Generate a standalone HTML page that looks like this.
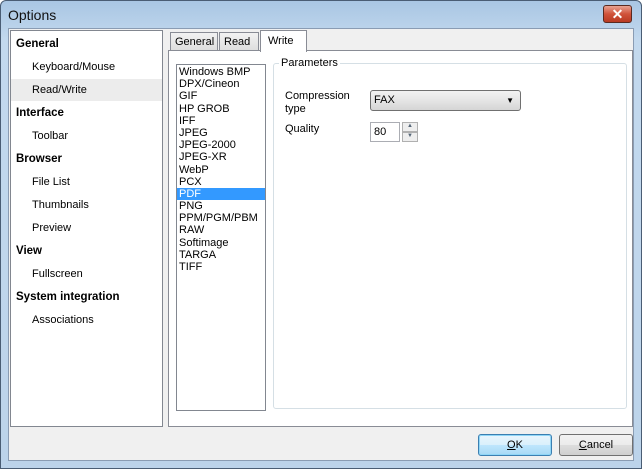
<!DOCTYPE html>
<html><head><style>
*{margin:0;padding:0;box-sizing:border-box}
body{width:642px;height:469px;overflow:hidden;font-family:"Liberation Sans",sans-serif;font-size:11px;color:#000;background:#fff}
.win{position:absolute;left:0;top:0;width:642px;height:469px;background:linear-gradient(#a9c6e3,#c3d9ee 40px,#bcd3ea);border:1px solid #4a5d74;border-radius:6px 6px 0 0}
.title{position:absolute;left:7px;top:6px;font-size:14px;color:#111}
.close{position:absolute;left:602px;top:4px;width:29px;height:18px;border:1px solid #5a2a20;border-radius:3px;background:linear-gradient(#e8a392,#d0533a 50%,#b83a22);color:#fff;font-weight:bold;text-align:center;font-size:14px;line-height:16px}
.client{position:absolute;left:7px;top:27px;width:626px;height:433px;background:#f0f0f0;border:1px solid #8a9cb3}
.abs{position:absolute}
.left{left:1px;top:1px;width:153px;height:397px;background:#fff;border:1px solid #828790}
.left div{position:absolute;left:0;width:151px;height:23px;line-height:25px}
.h{font-weight:bold;padding-left:5px;font-size:11.5px}
.s{padding-left:21px}
.tab{position:absolute;top:3px;height:20px;border:1px solid #898c95;border-bottom:none;background:linear-gradient(#f2f2f2,#dcdcdc);padding:0 4px;line-height:18px}
.panel{left:159px;top:21px;width:465px;height:377px;background:#fff;border:1px solid #898c95}
.list{left:7px;top:13px;width:90px;height:347px;border:1px solid #828790;background:#fff;padding-top:1px}
.list div{height:12.2px;line-height:12px;padding-left:2px}
.grp{left:104px;top:12px;width:354px;height:346px;border:1px solid #d5dfe5;border-radius:3px}
.btn{position:absolute;top:405px;width:74px;height:22px;border:1px solid #707070;border-radius:3px;background:linear-gradient(#f2f2f2,#ebebeb 50%,#dddddd 51%,#cfcfcf);text-align:center;line-height:20px}
</style></head><body>
<div class="win">
<div class="title">Options</div>
<div class="close">✕</div>
<div class="client">
<div class="abs left">
<div class="h" style="top:1px">General</div>
<div class="s" style="top:24px">Keyboard/Mouse</div>
<div class="s" style="top:48px;background:#ececec;height:22px;line-height:23px">Read/Write</div>
<div class="h" style="top:70px">Interface</div>
<div class="s" style="top:93px">Toolbar</div>
<div class="h" style="top:116px">Browser</div>
<div class="s" style="top:139px">File List</div>
<div class="s" style="top:162px">Thumbnails</div>
<div class="s" style="top:185px">Preview</div>
<div class="h" style="top:208px">View</div>
<div class="s" style="top:231px">Fullscreen</div>
<div class="h" style="top:254px">System integration</div>
<div class="s" style="top:277px">Associations</div>
</div>
<div class="tab" style="left:161px;width:48px">General</div>
<div class="tab" style="left:210px;width:40px">Read</div>
<div class="abs panel">
<div class="abs list">
<div>Windows BMP</div><div>DPX/Cineon</div><div>GIF</div><div>HP GROB</div><div>IFF</div><div>JPEG</div><div>JPEG-2000</div><div>JPEG-XR</div><div>WebP</div><div>PCX</div><div style="background:#3399ff;color:#fff">PDF</div><div>PNG</div><div>PPM/PGM/PBM</div><div>RAW</div><div>Softimage</div><div>TARGA</div><div>TIFF</div>
</div>
<div class="abs grp">
<div class="abs" style="left:5px;top:-7px;background:#fff;padding:0 2px">Parameters</div>
<div class="abs" style="left:11px;top:26px;line-height:13px">Compression<br>type</div>
<div class="abs" style="left:96px;top:26px;width:151px;height:21px;border:1px solid #707070;border-radius:3px;background:linear-gradient(#f2f2f2,#e5e5e5 50%,#d5d5d5);padding-left:3px;line-height:19px">FAX<span style="position:absolute;right:6px;top:0;font-size:8px">▼</span></div>
<div class="abs" style="left:11px;top:59px">Quality</div>
<div class="abs" style="left:96px;top:58px;width:30px;height:20px;border:1px solid #abadb3;background:#fff;padding-left:3px;line-height:18px">80</div>
<div class="abs" style="left:128px;top:58px;width:16px;height:10px;border:1px solid #b0b0b0;background:#eee;font-size:6px;text-align:center;color:#567">▲</div>
<div class="abs" style="left:128px;top:68px;width:16px;height:10px;border:1px solid #b0b0b0;background:#eee;font-size:6px;text-align:center;color:#567">▼</div>
</div>
</div>
<div class="tab" style="left:251px;top:1px;height:22px;width:47px;background:#fff;line-height:20px;padding-left:7px;z-index:2">Write</div>
<div class="btn" style="left:469px;border-color:#3c7fb1;background:linear-gradient(#eaf6fd,#d9f0fc 50%,#bee6fd 51%,#a7d9f5);box-shadow:inset 0 0 0 1px #8fd6f7"><u>O</u>K</div>
<div class="btn" style="left:550px"><u>C</u>ancel</div>
</div>
</div>
</body></html>
